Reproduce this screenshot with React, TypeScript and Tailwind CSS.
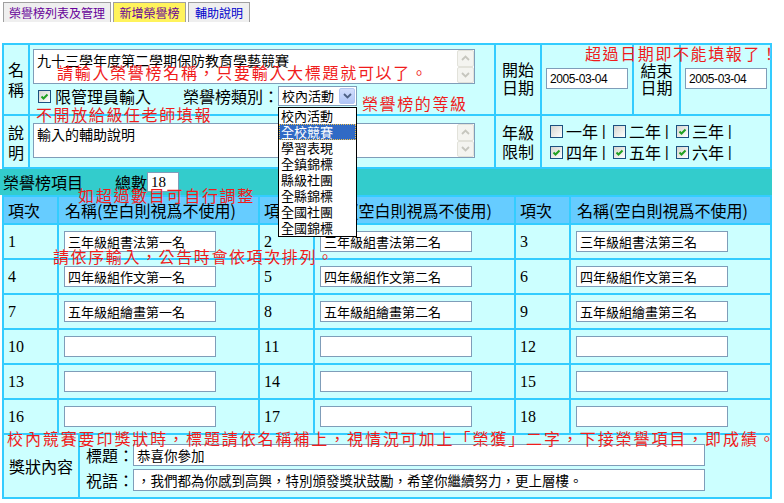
import { Fragment } from 'react';

const NAMES: Record<number, string> = {
  1: '三年級組書法第一名',
  2: '三年級組書法第二名',
  3: '三年級組書法第三名',
  4: '四年級組作文第一名',
  5: '四年級組作文第二名',
  6: '四年級組作文第三名',
  7: '五年級組繪畫第一名',
  8: '五年級組繪畫第二名',
  9: '五年級組繪畫第三名',
};

const LEVELS = ['校內活動', '全校競賽', '學習表現', '全鎮錦標', '縣級社團', '全縣錦標', '全國社團', '全國錦標'];

const GRADES = [
  [
    { label: '一年', checked: false },
    { label: '二年', checked: false },
    { label: '三年', checked: true },
  ],
  [
    { label: '四年', checked: true },
    { label: '五年', checked: true },
    { label: '六年', checked: true },
  ],
];

// red hand-written hints pasted over the form
const NOTES = [
  { text: '請輸入榮譽榜名稱，只要輸入大標題就可以了。', pos: 'left-[57px] top-[64px] tracking-[1.7px]' },
  { text: '超過日期即不能填報了！', pos: 'left-[585px] top-[45px] tracking-[1.6px]' },
  { text: '不開放給級任老師填報', pos: 'left-[36px] top-[106px] tracking-[1.6px]' },
  { text: '榮譽榜的等級', pos: 'left-[362px] top-[95px] tracking-[1.6px]' },
  { text: '如超過數目可自行調整', pos: 'left-[78px] top-[187px] tracking-[1.7px]' },
  { text: '請依序輸入，公告時會依項次排列。', pos: 'left-[53px] top-[248px] tracking-[1.6px]' },
  {
    text: '校內競賽要印獎狀時，標題請依名稱補上，視情況可加上「榮獲」二字，下接榮譽項目，即成績。',
    pos: 'left-[7px] top-[430px] tracking-[1.9px]',
  },
];

function XpCheckbox({ checked }: { checked: boolean }) {
  return (
    <span className="flex h-[13px] w-[13px] shrink-0 items-center justify-center border border-[#1c5180] bg-linear-to-br from-[#d6d6d0] to-white">
      {checked && (
        <svg width="9" height="9" viewBox="0 0 9 9">
          <path d="M1.5 4.5 L3.5 6.5 L7.5 2.5" fill="none" stroke="#21a121" strokeWidth="2" />
        </svg>
      )}
    </span>
  );
}

function Chevron({ up, color }: { up?: boolean; color: string }) {
  return (
    <svg width="9" height="6" viewBox="0 0 9 6">
      <path d={up ? 'M1 5 L4.5 1.5 L8 5' : 'M1 1 L4.5 4.5 L8 1'} fill="none" stroke={color} strokeWidth="1.8" />
    </svg>
  );
}

function TextBox({ text }: { text: string }) {
  return (
    <div className="flex h-[35px] w-[442px] border border-[#7f9db9] bg-white">
      <div className="flex-1 pl-[3px] pt-[2px] text-[14px] leading-[16px]">{text}</div>
      <div className="flex w-[17px] flex-col">
        <span className="flex flex-1 items-center justify-center rounded-[2px] border border-[#e2e2da] bg-[#f4f4f0]">
          <Chevron up color="#c6c6be" />
        </span>
        <span className="flex flex-1 items-center justify-center rounded-[2px] border border-[#e2e2da] bg-[#f4f4f0]">
          <Chevron color="#c6c6be" />
        </span>
      </div>
    </div>
  );
}

function Field({ value, className }: { value: string; className: string }) {
  return (
    <input
      readOnly
      value={value}
      className={`border border-[#7f9db9] bg-white px-[3px] text-black outline-none ${className}`}
    />
  );
}

function Tab({ label, className }: { label: string; className: string }) {
  return (
    <div
      className={`flex h-[20px] items-center justify-center border border-b-0 border-[#a0a0a0] text-[12px] leading-none ${className}`}
    >
      {label}
    </div>
  );
}

export default function App() {
  return (
    <div className="relative h-[503px] w-[784px] overflow-hidden bg-white font-['Noto_Sans_CJK_TC',sans-serif] text-black">
      <div className="flex gap-[2px] pl-[3px] pt-[2px]">
        <Tab label="榮譽榜列表及管理" className="w-[108px] bg-[#efefef] text-[#660099]" />
        <Tab label="新增榮譽榜" className="w-[73px] bg-[#fff35c] text-[#660099]" />
        <Tab label="輔助說明" className="w-[62px] bg-[#efefef] text-[#0000cc]" />
      </div>

      {/* 基本資料 */}
      <div className="ml-[2px] mt-[21px] grid w-[770px] grid-cols-[24px_464px_44px_90px_45px_89px] grid-rows-[69px_51px] gap-[2px] bg-[#33ccff] p-[2px] text-[16px]">
        <div className="flex flex-col items-center justify-center bg-[#ccffff] pb-[2px] leading-[20px]">
          <span>名</span>
          <span>稱</span>
        </div>
        <div className="flex flex-col bg-[#ccffff] pl-[3px] pt-[4px]">
          <TextBox text="九十三學年度第二學期保防教育學藝競賽" />
          <div className="mt-[2px] flex h-[20px] items-center">
            <span className="ml-[5px]">
              <XpCheckbox checked />
            </span>
            <span className="ml-[4px] leading-[18px]">限管理員輸入</span>
            <span className="ml-[32px] w-[95px] whitespace-nowrap leading-[18px]">榮譽榜類別：</span>
            <div className="flex h-[20px] w-[79px] items-center border border-[#7f9db9] bg-white pl-[3px] text-[13px]">
              <span className="flex-1 leading-[16px]">校內活動</span>
              <span className="mr-[1px] flex h-[16px] w-[16px] items-center justify-center rounded-[2px] border border-[#b2c6f2] bg-linear-to-b from-[#d2defc] to-[#b0c6f7]">
                <Chevron color="#4d6185" />
              </span>
            </div>
          </div>
        </div>
        <div className="flex flex-col items-center justify-center bg-[#ccffff] pb-[4px] leading-[18px]">
          <span>開始</span>
          <span>日期</span>
        </div>
        <div className="flex items-center bg-[#ccffff] pb-[2px] pl-[4px]">
          <Field value="2005-03-04" className="h-[21px] w-[82px] font-['Liberation_Sans',sans-serif] text-[12px] tracking-[-0.4px]" />
        </div>
        <div className="flex flex-col items-center justify-center bg-[#ccffff] pb-[2px] leading-[17px]">
          <span>結束</span>
          <span>日期</span>
        </div>
        <div className="flex items-center bg-[#ccffff] pb-[2px] pl-[4px]">
          <Field value="2005-03-04" className="h-[21px] w-[82px] font-['Liberation_Sans',sans-serif] text-[12px] tracking-[-0.4px]" />
        </div>

        <div className="flex flex-col items-center justify-center bg-[#ccffff] leading-[20px]">
          <span>說</span>
          <span>明</span>
        </div>
        <div className="flex items-center bg-[#ccffff] pb-[2px] pl-[3px]">
          <TextBox text="輸入的輔助說明" />
        </div>
        <div className="flex flex-col items-center justify-center bg-[#ccffff] leading-[19px]">
          <span>年級</span>
          <span>限制</span>
        </div>
        <div className="col-span-3 flex flex-col justify-center gap-[3px] bg-[#ccffff] pl-[8px]">
          {GRADES.map((row, r) => (
            <div key={r} className="flex h-[18px]">
              {row.map((g) => (
                <div key={g.label} className="flex w-[63px] items-center">
                  <XpCheckbox checked={g.checked} />
                  <span className="ml-[3px] leading-[18px]">{g.label}</span>
                  <span className="ml-[4px] font-['Liberation_Sans',sans-serif] text-[14px]">|</span>
                </div>
              ))}
            </div>
          ))}
        </div>
      </div>

      {/* 項目數 */}
      <div className="flex h-[26px] w-[772px] items-center bg-[#33cccc] text-[16px]">
        <span className="pl-[3px] leading-[18px]">榮譽榜項目</span>
        <span className="ml-[32px] leading-[18px]">總數</span>
        <Field value="18" className="h-[20px] w-[32px] font-['Liberation_Serif',serif] text-[15px]" />
      </div>

      {/* 項目表 */}
      <div className="ml-[2px] grid w-[770px] grid-cols-[53px_199px_53px_199px_53px_199px] gap-[2px] bg-[#33ccff] px-[2px] pt-[2px] text-[16px]">
        {[0, 1, 2].map((i) => (
          <Fragment key={i}>
            <div className="flex h-[26px] items-center bg-[#66ccff] pl-[4px]">項次</div>
            <div className="flex h-[26px] items-center whitespace-nowrap bg-[#66ccff] pl-[6px]">名稱(空白則視爲不使用)</div>
          </Fragment>
        ))}
        {Array.from({ length: 18 }, (_, k) => k + 1).map((n) => (
          <Fragment key={n}>
            <div className="flex h-[33px] items-center bg-[#ccffff] pl-[4px] font-['Liberation_Serif',serif]">{n}</div>
            <div className="flex items-center bg-[#ccffff] pl-[5px]">
              <Field value={NAMES[n] ?? ''} className="h-[21px] w-[152px] text-[13px]" />
            </div>
          </Fragment>
        ))}
      </div>

      {/* 獎狀內容 */}
      <div className="ml-[2px] grid w-[770px] grid-cols-[74px_690px] gap-[2px] bg-[#33ccff] p-[2px] text-[16px]">
        <div className="flex h-[62px] items-center justify-center bg-[#ccffff]">獎狀內容</div>
        <div className="flex flex-col gap-[3px] bg-[#ccffff] pl-[6px] pt-[9px]">
          <div className="flex items-center">
            <span className="w-[47px] whitespace-nowrap leading-[18px]">標題：</span>
            <Field value="恭喜你參加" className="h-[22px] w-[572px] text-[13.5px]" />
          </div>
          <div className="flex items-center">
            <span className="w-[47px] whitespace-nowrap leading-[18px]">祝語：</span>
            <Field
              value="，我們都為你感到高興，特別頒發獎狀鼓勵，希望你繼續努力，更上層樓。"
              className="h-[22px] w-[572px] text-[13.5px]"
            />
          </div>
        </div>
      </div>

      {/* 類別下拉選單 (展開中) */}
      <div className="absolute left-[278px] top-[107px] w-[79px] border border-black bg-white text-[13px]">
        {LEVELS.map((lv) => (
          <div
            key={lv}
            className={
              lv === '全校競賽'
                ? 'h-[16px] border border-dotted border-[#f2c14e] bg-[#316ac5] pl-[1px] leading-[14px] text-white'
                : 'h-[16px] pl-[2px] leading-[16px]'
            }
          >
            {lv}
          </div>
        ))}
      </div>

      {NOTES.map((n) => (
        <div
          key={n.text}
          className={`pointer-events-none absolute whitespace-nowrap text-[16px] leading-[16px] text-[#f01c1c] ${n.pos}`}
        >
          {n.text}
        </div>
      ))}
    </div>
  );
}
